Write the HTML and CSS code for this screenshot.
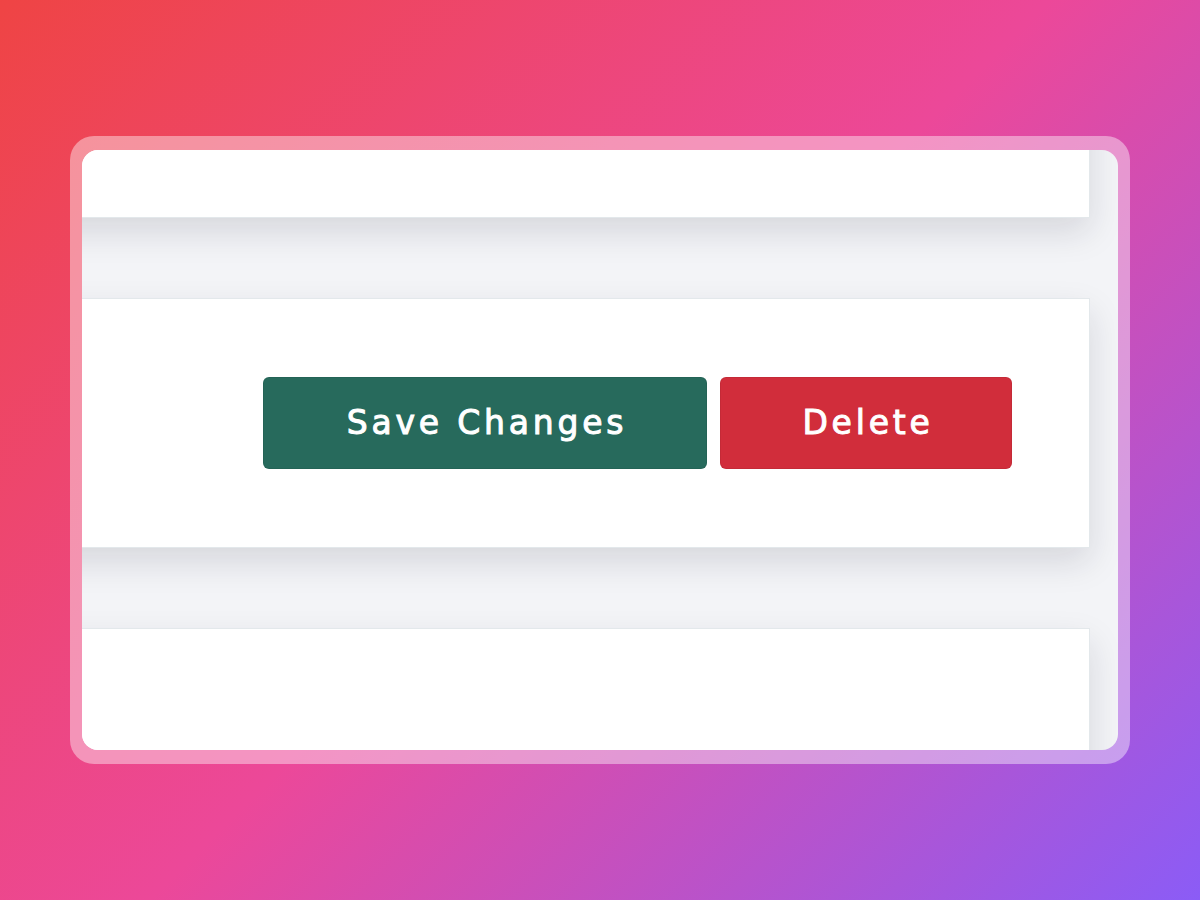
FILE: index.html
```html
<!DOCTYPE html>
<html lang="en">
<head>
<meta charset="utf-8">
<title>Settings</title>
<link rel="stylesheet" href="styles.css">
</head>
<body>
<div class="frame">
  <div class="window">
    <div class="stack">
      <section class="card"></section>
      <section class="card card-actions">
        <button class="btn btn-save" type="button">Save Changes</button>
        <button class="btn btn-delete" type="button">Delete</button>
      </section>
      <section class="card"></section>
    </div>
  </div>
</div>
</body>
</html>
```
FILE: styles.css
```css
html, body {
  margin: 0;
  padding: 0;
}
body {
  width: 1200px;
  height: 900px;
  background: linear-gradient(135deg, #ef4444 0%, #ec4899 50%, #8b5cf6 100%);
  display: flex;
  align-items: center;
  justify-content: center;
  font-family: "DejaVu Sans", "Liberation Sans", sans-serif;
}
.frame {
  width: 1060px;
  height: 628px;
  box-sizing: border-box;
  padding: 14px 12px;
  border-radius: 24px;
  background: rgba(255, 255, 255, 0.42);
}
.window {
  width: 100%;
  height: 100%;
  border-radius: 16px;
  background: #f3f4f7;
  overflow: hidden;
}
.stack {
  display: flex;
  flex-direction: column;
  gap: 80px;
  margin-top: -182px;
  margin-left: -40px;
  margin-right: 28px;
}
.card {
  height: 250px;
  flex: none;
  box-sizing: border-box;
  background: #ffffff;
  border: 1px solid #e3e8eb;
  box-shadow: 0 14px 32px rgba(20, 25, 45, 0.13);
}
.card-actions {
  display: flex;
  align-items: center;
  justify-content: flex-end;
  gap: 13px;
  padding-right: 77px;
}
.btn {
  height: 92px;
  border: 1px solid rgba(0, 0, 0, 0.06);
  border-radius: 6px;
  color: #ffffff;
  font-family: "DejaVu Sans", "Liberation Sans", sans-serif;
  font-weight: 400;
  font-size: 33px;
  letter-spacing: 3.8px;
  -webkit-text-stroke: 1px #ffffff;
  padding: 0 0 2px 4px;
  cursor: pointer;
}
.btn-save {
  width: 444px;
  background: #276a5c;
}
.btn-delete {
  width: 292px;
  background: #d12d3b;
}
```
